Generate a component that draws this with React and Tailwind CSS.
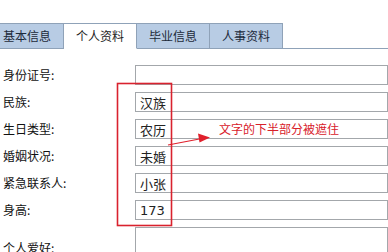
import React from 'react'

const tabs = [
  { label: '基本信息', w: 'w-[64px]', cls: 'justify-start pl-[3px]' },
  { label: '个人资料', w: 'w-[73px]', active: true },
  { label: '毕业信息', w: 'w-[73px]' },
  { label: '人事资料', w: 'w-[73px]' },
]

const rows = [
  { label: '身份证号:', value: '' },
  { label: '民族:', value: '汉族' },
  { label: '生日类型:', value: '农历' },
  { label: '婚姻状况:', value: '未婚' },
  { label: '紧急联系人:', value: '小张' },
  { label: '身高:', value: '173', num: true },
]

const Field = ({ value, num }) => (
  <div className="flex-1 h-[20px] border border-[#a3a7ab] bg-white overflow-hidden">
    <div className={`pl-[4px] pt-[2px] text-[13px] leading-[15px] text-[#222] ${num ? "font-['DejaVu_Sans',sans-serif]" : ''}`}>
      {value}
    </div>
  </div>
)

export default function App() {
  return (
    <div className="relative w-[388px] h-[252px] overflow-hidden bg-white text-[#111] font-['Noto_Sans_CJK_SC',sans-serif]">
      {/* 标签页 */}
      <div className="flex pt-[23px]">
        {tabs.map((t) => (
          <div
            key={t.label}
            className={`${t.w} h-[26px] flex items-center border-t border-r border-[#8fa2b8] text-[12px] ${
              t.cls || 'justify-center'
            } ${t.active ? 'bg-white border-b border-b-white text-[#222]' : 'bg-[#b8cce4] border-b text-[#1c2a3a]'}`}
          >
            {t.label}
          </div>
        ))}
        <div className="flex-1 h-[26px] border-b border-[#8fa2b8]" />
      </div>

      {/* 表单 */}
      <div className="pt-[16px]">
        {rows.map((r) => (
          <div key={r.label} className="flex items-center h-[20px] mb-[7px]">
            <div className="w-[135px] pl-[3px] text-[12px]">{r.label}</div>
            <Field value={r.value} num={r.num} />
          </div>
        ))}
        <div className="flex items-center h-[42px]">
          <div className="w-[135px] pl-[3px] text-[12px]">个人爱好:</div>
          <div className="flex-1 h-[42px] border border-[#a3a7ab] bg-white" />
        </div>
      </div>

      {/* 标注 */}
      <svg className="absolute left-0 top-0 pointer-events-none" width="388" height="252">
        <rect x="117.5" y="83.5" width="54" height="142" fill="none" stroke="#d9222e" strokeWidth="1.6" />
        <line x1="168" y1="145" x2="202" y2="138.5" stroke="#e0202c" strokeWidth="1.2" />
        <polygon points="210,137.5 198,133.5 199.5,142.5" fill="#e0202c" />
      </svg>
      <div className="absolute left-[219px] top-[121px] text-[12px] leading-[16px] text-[#d8212b]">
        文字的下半部分被遮住
      </div>
    </div>
  )
}
